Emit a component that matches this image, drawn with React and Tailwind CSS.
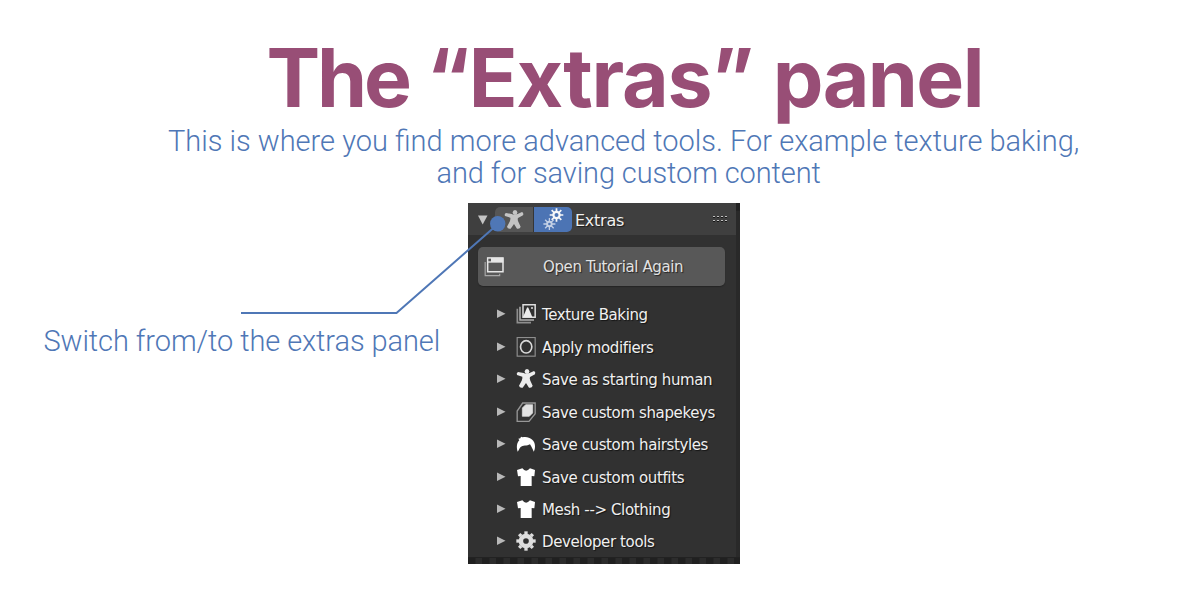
function Person({ className }) {
  return (
    <svg viewBox="0 0 60 60" className={className} fill="currentColor">
      <ellipse cx="33" cy="7.5" rx="7" ry="7.5" />
      <path d="M6 9Q0 12 3 18L19 23Q20 28 17 35L9 50Q11 58 20 56L30 42L39 56Q48 58 50 50L43 35Q40 28 42 24L57 16Q60 9 54 6L41 12L30 15L23 12Z" />
    </svg>
  );
}

function Gear({ cx, cy, r, body, hole, tooth, color }) {
  return (
    <g transform={`translate(${cx} ${cy})`} stroke={color} fill="none">
      <circle r={(body + hole) / 2} strokeWidth={body - hole} />
      {[0, 45, 90, 135, 180, 225, 270, 315].map((a) => (
        <path key={a} d={`M0 ${-body + 1}V${-r}`} strokeWidth={tooth} transform={`rotate(${a})`} />
      ))}
    </g>
  );
}

const Baking = () => (
  <svg viewBox="0 0 60 60" className="size-5" fill="none">
    <path d="M4 14V56H45" stroke="#8e8e8e" strokeWidth="5" />
    <path d="M12 8V48H54" stroke="#b0b0b0" strokeWidth="4.5" />
    <path d="M21 2.5H57.5V40H21Z" stroke="#dedede" strokeWidth="4.5" />
    <path d="M21 39L33 11Q35 9 37 11L49 39Z" fill="#ececec" />
    <circle cx="48" cy="12" r="3" fill="#dedede" />
  </svg>
);

const Modifiers = () => (
  <svg viewBox="0 0 60 60" className="size-5" fill="none">
    <rect x="3.5" y="1.5" width="54" height="56" stroke="#8e8e8e" strokeWidth="3.5" />
    <ellipse cx="30.5" cy="29.5" rx="17" ry="18.5" stroke="#dadada" strokeWidth="5" />
  </svg>
);

const Shapekeys = () => (
  <svg viewBox="0 0 60 60" className="size-5">
    <path d="M20 3H57.5V35L39 58H3.5V27Z" fill="none" stroke="#979797" strokeWidth="4" />
    <path d="M29 8H50V33L40 43H19V18Z" fill="#e2e2e2" stroke="#e2e2e2" strokeWidth="2" strokeLinejoin="round" />
  </svg>
);

const Hair = () => (
  <svg viewBox="0 0 60 60" className="size-5" fill="#fff">
    <path d="M5 53C1 40 2 27 10 19L7 14L13 13L15 8L20 10C38 6 57 17 57 36C57 44 56 48 53 53C51 47 48 41 42 31C33 36 20 34 14 39C10 43 9 48 5 53Z" />
  </svg>
);

const Shirt = () => (
  <svg viewBox="0 0 60 60" className="size-5" fill="#fff">
    <path d="M3 9L19 4Q30 18 42 4L57 9L55 28L47 27V57H14V27L6 28Z" />
  </svg>
);

const Tools = () => (
  <svg viewBox="0 0 60 60" className="size-5">
    <Gear cx={30} cy={30} r={29} body={22} hole={8.5} tooth={10} color="#dedede" />
  </svg>
);

const rows = [
  ["Texture Baking", <Baking />],
  ["Apply modifiers", <Modifiers />],
  ["Save as starting human", <Person className="size-5 text-[#ececec]" />],
  ["Save custom shapekeys", <Shapekeys />],
  ["Save custom hairstyles", <Hair />],
  ["Save custom outfits", <Shirt />],
  ["Mesh --> Clothing", <Shirt />],
  ["Developer tools", <Tools />],
];

function Panel() {
  return (
    <section className="flex h-[361px] w-[272px] flex-col bg-[#292929] font-['DejaVu_Sans',sans-serif] text-[15px] tracking-[-0.38px] text-[#f0f0f0] [text-shadow:1px_1px_1px_#0009]">
      <div className="flex h-[354px]">
        <div className="w-[268px] bg-[#313131]">
          <header className="flex h-8 items-center bg-[#3f3f3f] pl-[10px] pr-[9px]">
            <svg viewBox="0 0 10 10" className="mr-[7px] mt-[1px] size-[10px]">
              <path d="M0 0.5H9.5L4.7 9.5Z" fill="#c4c4c4" />
            </svg>
            <div className="mt-[1px] flex h-[25px] w-[77px] gap-px overflow-hidden rounded-[5px] bg-[#353535]">
              <div className="flex w-[38px] items-center justify-center bg-[#565656]">
                <Person className="size-5 text-[#c4c4c4]" />
              </div>
              <div className="w-[38px] bg-[#4c74b4]">
                <svg viewBox="0 0 38 25" className="h-[25px] w-[38px]">
                  <Gear cx={22.5} cy={8} r={6.8} body={4.2} hole={2} tooth={1.7} color="#f8f8f8" />
                  <Gear cx={15.4} cy={17} r={6} body={3.2} hole={1.3} tooth={1.3} color="#c3d0e6" />
                </svg>
              </div>
            </div>
            <span className="ml-[3px] mt-[2px] text-[16px] leading-[19px] tracking-[-0.25px]">Extras</span>
            <svg viewBox="0 0 14 7" className="ml-auto h-[7px] w-[14px]" shapeRendering="crispEdges">
              {[0, 4, 8, 12].map((x) => (
                <g key={x}>
                  <path d={`M${x} 0h2v1h-2zM${x} 4h2v1h-2z`} fill="#c0c0c0" />
                  <path d={`M${x} 1h2v1h-2zM${x} 5h2v1h-2z`} fill="#161616" />
                </g>
              ))}
            </svg>
          </header>
          <div className="ml-[10px] mt-3 flex h-[39px] w-[247px] items-center rounded-[5px] bg-[#585858] pl-[6px] text-[#e2e2e2] shadow-[0_1px_1px_#252525]">
            <svg viewBox="0 0 60 60" className="size-5" fill="none">
              <path d="M3.5 15V56H47V50" stroke="#a8a8a8" strokeWidth="3.5" />
              <path d="M11 3H57V44H11Z" stroke="#e6e6e6" strokeWidth="4.5" />
              <path d="M10 2H58V17H10Z" fill="#e6e6e6" />
              <path d="M13 5H21V13H13Z" fill="#585858" />
            </svg>
            <span className="ml-[39px] mt-[2px]">Open Tutorial Again</span>
          </div>
          <ul className="mt-3">
            {rows.map(([label, icon]) => (
              <li key={label} className="flex h-[32.5px] items-center pl-[29px] last:h-[31px]">
                <svg viewBox="0 0 9 10" className="mr-[10px] h-[10px] w-[9px]">
                  <path d="M0 0.5L8.5 4.7L0 9Z" fill="#b8b8b8" />
                </svg>
                {icon}
                <span className="ml-[6px] mt-[2px] whitespace-nowrap">{label}</span>
              </li>
            ))}
          </ul>
        </div>
        <div className="w-1 border-t-[8px] border-[#222222]" />
      </div>
      <div className="h-[7px] border-t border-[#222222] bg-[repeating-linear-gradient(90deg,#202020_0px,#202020_7px,#2c2c2c_8px,#2c2c2c_14px)]" />
    </section>
  );
}

export default function App() {
  return (
    <main className="relative h-[600px] w-[1200px] overflow-hidden bg-white font-[Roboto,sans-serif] text-[#4f77b6]">
      <h1 className="h-[125px] pl-[266.5px] pt-[29px] font-[Inter,sans-serif] text-[80.5px] font-bold leading-[97px] tracking-[-1.25px] text-[#984e76]">
        <span className="tracking-[-3.2px]">The</span> <span className="tracking-[-1.2px]">“Extras”</span>{" "}
        <span className="ml-[2px] tracking-[-1.6px]">panel</span>
      </h1>
      <div className="h-[78px] text-[29px] font-light leading-8">
        <p className="pl-[168px]">This is where you find more advanced tools. For example texture baking,</p>
        <p className="pl-[436.5px] tracking-[-0.11px]">and for saving custom content</p>
      </div>
      <div className="flex">
        <p className="w-[468px] whitespace-nowrap pl-[43.5px] pt-[122px] text-[29px] font-light leading-8 tracking-[-0.08px]">
          Switch from/to the extras panel
        </p>
        <Panel />
      </div>
      <svg viewBox="0 0 1200 600" className="pointer-events-none absolute inset-0 h-[600px] w-[1200px]">
        <path d="M241 313H396.5L498 224" fill="none" stroke="#4f77b6" strokeWidth="2" />
        <circle cx="497.7" cy="223.8" r="7.7" fill="#4f77b6" />
      </svg>
    </main>
  );
}
